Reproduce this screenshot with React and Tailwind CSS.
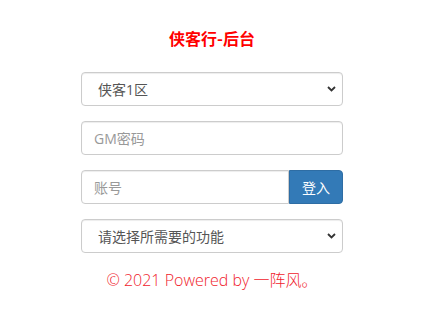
import React from "react";

const Chevron = () => (
  <svg
    className="pointer-events-none absolute right-[7px] top-1/2 -translate-y-1/2"
    width="9"
    height="6"
    viewBox="0 0 9 6"
  >
    <path d="M1 1 L4.5 4.5 L8 1" fill="none" stroke="#333" strokeWidth="1.8" />
  </svg>
);

const base =
  "block w-full h-[34px] border border-[#ccc] rounded-[4px] bg-white text-[14px] text-[#555] outline-none placeholder:text-[#999] shadow-[inset_0_1px_1px_rgba(0,0,0,0.075)]";

export default function App() {
  return (
    <div
      className="min-h-[322px] bg-white"
      style={{ fontFamily: '"Open Sans", "Noto Sans CJK SC", sans-serif' }}
    >
      <div className="ml-[81px] w-[262px] pt-[28px]">
        <h1
          className="text-center text-[16px] leading-[20px] font-bold text-[#f00]"
          style={{ fontFamily: '"Noto Sans CJK SC", sans-serif' }}
        >
          侠客行-后台
        </h1>
        <div className="mt-[24px] flex flex-col gap-[15px]">
          <div className="relative">
            <select className={base + " appearance-none pl-[16px] pr-[24px]"} defaultValue="1">
              <option value="1">侠客1区</option>
            </select>
            <Chevron />
          </div>
          <input className={base + " px-[12px]"} placeholder="GM密码" />
          <div className="flex">
            <input
              className={base + " px-[12px] rounded-r-none flex-1 min-w-0"}
              placeholder="账号"
            />
            <button className="h-[34px] w-[54px] shrink-0 rounded-r-[4px] border border-[#2e6da4] bg-[#337ab7] text-[14px] text-white">
              登入
            </button>
          </div>
          <div className="relative">
            <select className={base + " appearance-none pl-[16px] pr-[24px]"} defaultValue="">
              <option value="">请选择所需要的功能</option>
            </select>
            <Chevron />
          </div>
        </div>
        <p className="mt-[16px] text-center text-[16px] leading-[22px] font-light text-[#f0222c]">
          © 2021 Powered by 一阵风。
        </p>
      </div>
    </div>
  );
}
